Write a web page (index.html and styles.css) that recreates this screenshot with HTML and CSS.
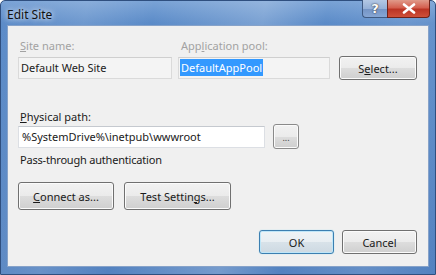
FILE: index.html
```html
<!DOCTYPE html>
<html>
<head>
<meta charset="utf-8">
<link rel="stylesheet" href="styles.css">
</head>
<body>
<div class="window">
  <div class="titlebar">
    <span class="title">Edit Site</span>
    <div class="caption-btns">
      <div class="cbtn help">?</div>
      <div class="cbtn close">
        <svg width="14" height="11" viewBox="0 0 14 11"><path d="M2 1.5 L12 9.5 M12 1.5 L2 9.5" stroke="#fff" stroke-width="2.6" stroke-linecap="round"/></svg>
      </div>
    </div>
  </div>
  <div class="frame">
    <div class="client">
      <div class="row labels">
        <span class="label disabled site-label"><u>S</u>ite name:</span>
        <span class="label disabled pool-label">App<u>l</u>ication pool:</span>
      </div>
      <div class="row fields">
        <div class="field ro site-field">Default Web Site</div>
        <div class="field ro pool-field"><span class="sel">DefaultAppPool</span></div>
        <div class="btn select-btn">S<u>e</u>lect...</div>
      </div>
      <div class="label path-label"><u>P</u>hysical path:</div>
      <div class="row path-row">
        <div class="field path-field">%SystemDrive%\inetpub\wwwroot</div>
        <div class="btn dots-btn">...</div>
      </div>
      <div class="label auth">Pass-through authentication</div>
      <div class="row actions">
        <div class="btn connect-btn"><u>C</u>onnect as...</div>
        <div class="btn test-btn">Test Settin<u>g</u>s...</div>
      </div>
      <div class="row footer">
        <div class="btn dlg-btn ok">OK</div>
        <div class="btn dlg-btn">Cancel</div>
      </div>
    </div>
  </div>
</div>
</body>
</html>
```
FILE: styles.css
```css
* { box-sizing: border-box; }
html, body { margin: 0; padding: 0; }
body {
  width: 436px;
  height: 275px;
  overflow: hidden;
  font-family: "Noto Sans", "Open Sans", sans-serif;
  font-size: 11px;
  color: #1a1a1a;
}
u { text-decoration: underline; text-underline-offset: 1px; }

.window {
  width: 436px;
  height: 275px;
  display: flex;
  flex-direction: column;
  background:
    linear-gradient(100deg, rgba(255,255,255,0) 0%, rgba(255,255,255,0.12) 18%, rgba(255,255,255,0) 32%, rgba(255,255,255,0.2) 55%, rgba(255,255,255,0) 68%, rgba(255,255,255,0.1) 85%, rgba(255,255,255,0) 100%),
    linear-gradient(to bottom, #7aa3d6 0px, #5b8bc8 22px, #5382c0 100%);
  border: 1px solid #2f4f7f;
  border-radius: 5px 5px 0 0;
}

.titlebar {
  height: 24px;
  display: flex;
  justify-content: space-between;
  align-items: flex-start;
  padding-left: 6px;
}
.title {
  margin-top: 5px;
  font-family: "Noto Sans", sans-serif;
  font-size: 12px;
  color: #111;
  text-shadow: 0 0 5px rgba(255,255,255,0.85), 0 0 8px rgba(255,255,255,0.6);
}
.caption-btns {
  display: flex;
  margin-top: -1px;
  margin-right: 5px;
}
.cbtn {
  height: 18px;
  display: flex;
  align-items: center;
  justify-content: center;
  border: 1px solid #3f5a82;
  border-top: none;
}
.help {
  width: 25px;
  border-radius: 0 0 0 4px;
  border-right: none;
  background: linear-gradient(to bottom, #b3c8e4 0%, #96b1d8 50%, #7393c4 51%, #86a6d4 100%);
  color: #fff;
  font-family: "DejaVu Sans", sans-serif;
  font-weight: bold;
  font-size: 13px;
  text-shadow: 0 0 1px #333, 0 0 2px #445;
}
.close {
  width: 43px;
  border-radius: 0 0 4px 0;
  border-color: #6e2219;
  background: linear-gradient(to bottom, #e09a8a 0%, #d4604f 45%, #bb3424 55%, #cf5039 100%);
}

.frame {
  flex: 1;
  padding: 0 6px 7px 6px;
}
.client {
  height: 100%;
  background: #f0f0f0;
  border: 1px solid #86a2c9;
  padding: 12px 11px 0 10px;
  display: flex;
  flex-direction: column;
}

.row { display: flex; align-items: center; }
.label { line-height: 15px; height: 15px; white-space: nowrap; }
.disabled { color: #a2a2a2; }
.site-label { width: 154px; padding-left: 2px; }
.pool-label { margin-left: 6px; padding-left: 3px; }

.fields { margin-top: 3px; height: 24px; }
.field {
  height: 22px;
  line-height: 20px;
  padding-left: 3px;
  white-space: nowrap;
  overflow: hidden;
}
.ro {
  background: #f4f4f4;
  border: 1px solid #dadada;
  border-top-color: #cfcfcf;
}
.site-field { width: 154px; padding-left: 2px; }
.pool-field { width: 152px; margin-left: 6px; padding-left: 1px; }
.sel { background: #3399ff; color: #fff; padding: 1px 1px; }

.btn {
  display: flex;
  align-items: center;
  justify-content: center;
  border: 1px solid #707070;
  border-radius: 3px;
  box-shadow: inset 0 0 0 1px #fbfbfb;
  background: linear-gradient(to bottom, #f2f2f2 0%, #ebebeb 50%, #dddddd 51%, #cfcfcf 100%);
  white-space: nowrap;
}
.select-btn { width: 78px; height: 24px; margin-left: 9px; }

.path-label { margin-top: 29px; padding-left: 2px; }
.path-row { height: 25px; }
.path-field {
  width: 247px;
  background: #fff;
  border: 1px solid #dcdfe4;
  border-top-color: #c5c9cf;
}
.dots-btn {
  width: 26px;
  height: 25px;
  margin-left: 8px;
  font-size: 9px;
  line-height: 1;
  padding-top: 2px;
  color: #444;
  border-color: #8a8a8a;
}

.auth { margin-top: 3px; padding-left: 2px; letter-spacing: -0.2px; }

.actions { margin-top: 15px; height: 28px; }
.connect-btn { width: 96px; height: 28px; }
.test-btn { width: 107px; height: 28px; margin-left: 10px; }

.footer { margin-top: 20px; justify-content: flex-end; }
.dlg-btn { width: 75px; height: 24px; }
.dlg-btn + .dlg-btn { margin-left: 8px; }
.ok {
  border-color: #3c7fb1;
  box-shadow: inset 0 0 0 1px #bfe6f8, 0 0 1px #7fd0ee;
  background: linear-gradient(to bottom, #eef3f6 0%, #e8eef2 50%, #d8e2e9 51%, #cdd9e2 100%);
}
```
